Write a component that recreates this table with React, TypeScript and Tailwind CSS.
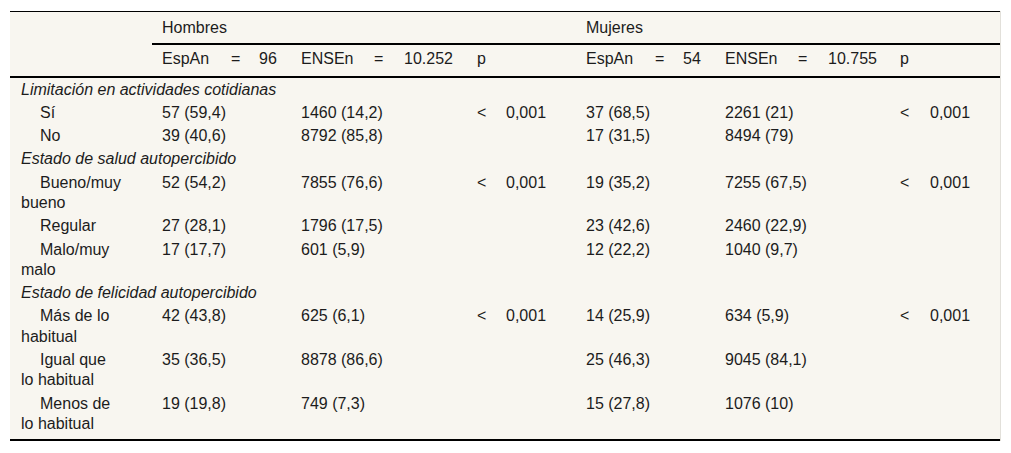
import { Fragment } from 'react';

type Row = {
  label: string[];
  h: [string, string];
  m: [string, string];
  sig?: boolean;
};

type Section = { title: string; rows: Row[] };

const sections: Section[] = [
  {
    title: 'Limitación en actividades cotidianas',
    rows: [
      { label: ['Sí'], h: ['57 (59,4)', '1460 (14,2)'], m: ['37 (68,5)', '2261 (21)'], sig: true },
      { label: ['No'], h: ['39 (40,6)', '8792 (85,8)'], m: ['17 (31,5)', '8494 (79)'] },
    ],
  },
  {
    title: 'Estado de salud autopercibido',
    rows: [
      { label: ['Bueno/muy', 'bueno'], h: ['52 (54,2)', '7855 (76,6)'], m: ['19 (35,2)', '7255 (67,5)'], sig: true },
      { label: ['Regular'], h: ['27 (28,1)', '1796 (17,5)'], m: ['23 (42,6)', '2460 (22,9)'] },
      { label: ['Malo/muy', 'malo'], h: ['17 (17,7)', '601 (5,9)'], m: ['12 (22,2)', '1040 (9,7)'] },
    ],
  },
  {
    title: 'Estado de felicidad autopercibido',
    rows: [
      { label: ['Más de lo', 'habitual'], h: ['42 (43,8)', '625 (6,1)'], m: ['14 (25,9)', '634 (5,9)'], sig: true },
      { label: ['Igual que', 'lo habitual'], h: ['35 (36,5)', '8878 (86,6)'], m: ['25 (46,3)', '9045 (84,1)'] },
      { label: ['Menos de', 'lo habitual'], h: ['19 (19,8)', '749 (7,3)'], m: ['15 (27,8)', '1076 (10)'] },
    ],
  },
];

const grid = 'grid grid-cols-[142px_139px_176px_29px_80px_139px_175px_30px_80px]';

function GroupHead({ n, total }: { n: string; total: string }) {
  return (
    <>
      <div className="h-[33px] border-b-2 border-black pl-[10px] pt-[4px]">
        <div className="flex">
          <span className="w-[69px]">EspAn</span>
          <span className="w-[28px]">=</span>
          <span>{n}</span>
        </div>
      </div>
      <div className="h-[33px] border-b-2 border-black pl-[10px] pt-[4px]">
        <div className="flex">
          <span className="w-[73px]">ENSEn</span>
          <span className="w-[30px]">=</span>
          <span>{total}</span>
        </div>
      </div>
      <div className="col-span-2 h-[33px] border-b-2 border-black pl-[10px] pt-[4px]">p</div>
    </>
  );
}

export default function App() {
  return (
    <div className="bg-white min-h-screen pt-[11px] pl-[10px]">
      <div
        className="w-[991px] bg-[#f8f6f0] border-r border-[#e2e0da] text-[16px] leading-[20.3px] text-[#1c1c1c]"
        style={{ fontFamily: '"Liberation Sans", Arial, sans-serif' }}
      >
        <div className="w-[990px] border-t border-black">
          {/* header */}
          <div className={grid}>
            <div className="h-[33px]" />
            <div className="col-span-4 h-[33px] border-b-2 border-black pl-[10px] pt-[6px]">Hombres</div>
            <div className="col-span-4 h-[33px] border-b-2 border-black pl-[10px] pt-[6px]">Mujeres</div>

            <div className="h-[33px] border-b-2 border-black" />
            <GroupHead n="96" total="10.252" />
            <GroupHead n="54" total="10.755" />
          </div>

          {/* body */}
          <div className={`${grid} pb-[3px] border-b-2 border-black`}>
            {sections.map((s) => (
              <Fragment key={s.title}>
                <div className="col-span-9 pl-[11px] pt-[1.5px] pb-[1.5px] italic">{s.title}</div>
                {s.rows.map((r) => (
                  <Fragment key={r.label.join(' ')}>
                    <div className="pl-[11px] pt-[1.5px] pb-[1.5px] indent-[19px]">
                      {r.label.map((l, i) => (
                        <Fragment key={l}>
                          {i > 0 && <br />}
                          {l}
                        </Fragment>
                      ))}
                    </div>
                    <div className="pl-[10px] pt-[1.5px]">{r.h[0]}</div>
                    <div className="pl-[10px] pt-[1.5px]">{r.h[1]}</div>
                    <div className="pl-[10px] pt-[1.5px]">{r.sig ? '<' : ''}</div>
                    <div className="pl-[10px] pt-[1.5px]">{r.sig ? '0,001' : ''}</div>
                    <div className="pl-[10px] pt-[1.5px]">{r.m[0]}</div>
                    <div className="pl-[10px] pt-[1.5px]">{r.m[1]}</div>
                    <div className="pl-[10px] pt-[1.5px]">{r.sig ? '<' : ''}</div>
                    <div className="pl-[10px] pt-[1.5px]">{r.sig ? '0,001' : ''}</div>
                  </Fragment>
                ))}
              </Fragment>
            ))}
          </div>
        </div>
      </div>
    </div>
  );
}
